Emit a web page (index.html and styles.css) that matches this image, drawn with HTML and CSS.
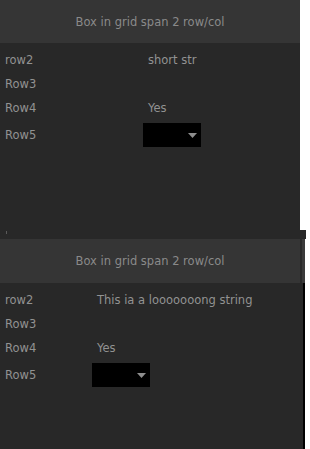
FILE: index.html
```html
<!DOCTYPE html>
<html lang="en">
<head>
    <meta charset="UTF-8">
    <meta name="viewport" content="width=device-width, initial-scale=1.0">
    <title>Grid span boxes</title>
    <link rel="stylesheet" href="styles.css">
</head>
<body>
    <div class="panel panel-top">
        <div class="panel-head">Box in grid span 2 row/col</div>
        <div class="grid grid-wide">
            <div class="label">row2</div>
            <div class="value">short str</div>
            <div class="label">Row3</div>
            <div class="value"></div>
            <div class="label">Row4</div>
            <div class="value">Yes</div>
            <div class="label row-tall">Row5</div>
            <div class="row-tall">
                <div class="dropdown">
                    <svg width="9" height="5" viewBox="0 0 9 5"><path d="M0 0H9L4.5 5Z" fill="#8e8e8e"/></svg>
                </div>
            </div>
        </div>
    </div>

    <div class="spacer"><span class="tick"></span></div>

    <div class="panel-wrap">
        <div class="panel panel-bottom">
            <div class="panel-head">Box in grid span 2 row/col</div>
            <div class="grid grid-narrow">
                <div class="label">row2</div>
                <div class="value">This ia a looooooong string</div>
                <div class="label">Row3</div>
                <div class="value"></div>
                <div class="label">Row4</div>
                <div class="value">Yes</div>
                <div class="label row-tall">Row5</div>
                <div class="row-tall">
                    <div class="dropdown">
                        <svg width="9" height="5" viewBox="0 0 9 5"><path d="M0 0H9L4.5 5Z" fill="#8e8e8e"/></svg>
                    </div>
                </div>
            </div>
        </div>
        <div class="scrollbar">
            <div class="scrollbar-head"></div>
            <div class="scrollbar-body"></div>
        </div>
    </div>
</body>
</html>
```

FILE: styles.css
```css
body {
    margin: 0;
    background: #ffffff;
    font-family: "DejaVu Sans", Verdana, sans-serif;
    font-size: 11.5px;
    color: #929292;
}
.panel {
    width: 300px;
    background-color: #282828;
}
.panel-top {
    height: 230px;
}
.panel-bottom {
    height: 210px;
}
.panel-head {
    height: 43px;
    background-color: #353535;
    color: #8a8a8a;
    display: flex;
    align-items: center;
    justify-content: center;
}
.panel-bottom .panel-head {
    height: 44px;
}
.grid {
    display: grid;
    grid-auto-rows: 24px;
    padding-top: 5px;
}
.grid-wide {
    grid-template-columns: 143px 1fr;
}
.grid-narrow {
    grid-template-columns: 92px 1fr;
}
.label,
.value {
    display: flex;
    align-items: center;
    padding-left: 5px;
}
.row-tall {
    height: 30px;
    display: flex;
    align-items: center;
}
.dropdown {
    width: 58px;
    height: 24px;
    background: #000000;
    display: flex;
    align-items: center;
    justify-content: flex-end;
    padding-right: 4px;
    box-sizing: border-box;
}
.spacer {
    width: 306px;
    height: 9px;
    background-color: #282828;
    position: relative;
}
.tick {
    position: absolute;
    left: 6px;
    top: 1px;
    width: 1px;
    height: 3px;
    background: #5a5a5a;
}
.panel-wrap {
    display: flex;
    width: 305px;
}
.scrollbar {
    width: 5px;
    display: flex;
    flex-direction: column;
}
.scrollbar-head {
    height: 44px;
    background: linear-gradient(to right, #2a2a2a 0 2px, #3a3a3a 2px);
}
.scrollbar-body {
    flex: 1;
    background: linear-gradient(to right, #282828 0 3px, #000000 3px);
}
```
